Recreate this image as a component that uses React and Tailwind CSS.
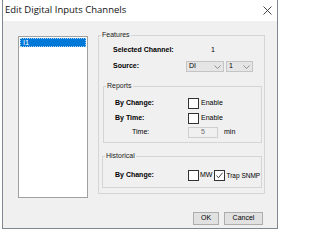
import React from "react";

const font = { fontFamily: '"Liberation Sans", Arial, sans-serif' };

function Chevron() {
  return (
    <svg width="7" height="4" viewBox="0 0 7 4" className="shrink-0">
      <polyline points="0.5,0.5 3.5,3.5 6.5,0.5" fill="none" stroke="#7a7a7a" strokeWidth="0.8" />
    </svg>
  );
}

function Check({ checked }) {
  return (
    <div className="w-[11px] h-[11px] border border-[#333] bg-white flex items-center justify-center shrink-0">
      {checked && (
        <svg width="9" height="9" viewBox="0 0 9 9">
          <polyline points="1.5,4.5 3.5,6.8 7.5,1.8" fill="none" stroke="#333" strokeWidth="0.9" />
        </svg>
      )}
    </div>
  );
}

export default function App() {
  return (
    <div className="w-[283px] h-[231px] bg-white overflow-hidden text-[#000] whitespace-nowrap" style={font}>
      <div className="ml-[2px] w-[276px] h-[229px] border border-t-0 border-[#7d8892] flex flex-col">
        {/* Title bar */}
        <div className="h-[21px] bg-white flex items-center justify-between pl-[2px] pr-[5px] shrink-0">
          <span className="text-[9.5px] text-[#111]" style={{ fontFamily: '"Open Sans", "Noto Sans", sans-serif' }}>
            Edit Digital Inputs Channels
          </span>
          <svg width="9" height="9" viewBox="0 0 9 9">
            <line x1="0.5" y1="0.5" x2="8.5" y2="8.5" stroke="#333" strokeWidth="0.9" />
            <line x1="8.5" y1="0.5" x2="0.5" y2="8.5" stroke="#333" strokeWidth="0.9" />
          </svg>
        </div>
        {/* Body */}
        <div className="flex-1 bg-[#f0f0f0] pt-[10px] pl-[15px] flex flex-col">
          <div className="flex">
            {/* list */}
            <div className="mt-[5px] w-[70px] h-[162px] bg-white border border-[#a0a0a0] p-[1px]">
              <div className="h-[9px] bg-[#0078d7] text-white text-[7.5px] leading-[7px] pl-[2px] border border-dotted border-[#9fcdf2]">
                I1
              </div>
            </div>
            {/* Features */}
            <fieldset className="ml-[10px] w-[166px] h-[163px] border border-[#d5d5d5] pl-[2px] pr-[2px] text-[7px]">
              <legend className="px-[1px] leading-[8px] text-[7px] text-[#222]">Features</legend>
              <div className="mt-[6px] h-[10px] flex items-center pl-[12px]">
                <span className="font-bold w-[98px]">Selected Channel:</span>
                <span>1</span>
              </div>
              <div className="mt-[6px] h-[11px] flex items-center pl-[12px]">
                <span className="font-bold w-[73px]">Source:</span>
                <div className="w-[38px] h-[11px] bg-[#e5e5e5] border border-[#c4c4c4] flex items-center justify-between pl-[2px] pr-[2px]">
                  <span>DI</span>
                  <Chevron />
                </div>
                <div className="ml-[2px] w-[27px] h-[11px] bg-[#e5e5e5] border border-[#c4c4c4] flex items-center justify-between pl-[2px] pr-[2px]">
                  <span>1</span>
                  <Chevron />
                </div>
              </div>
              {/* Reports */}
              <fieldset className="mt-[10px] ml-[2px] w-[159px] h-[61px] border border-[#d5d5d5] pl-[2px]">
                <legend className="px-[1px] leading-[8px] text-[7px] text-[#222]">Reports</legend>
                <div className="mt-[8px] h-[11px] flex items-center pl-[9px]">
                  <span className="font-bold w-[73px]">By Change:</span>
                  <Check />
                  <span className="ml-[2px]">Enable</span>
                </div>
                <div className="mt-[4px] h-[11px] flex items-center pl-[9px]">
                  <span className="font-bold w-[73px]">By Time:</span>
                  <Check />
                  <span className="ml-[2px]">Enable</span>
                </div>
                <div className="mt-[3px] h-[11px] flex items-center pl-[26px]">
                  <span className="w-[56px]">Time:</span>
                  <div className="w-[30px] h-[11px] border border-[#cfcfcf] bg-[#f0f0f0] flex items-center justify-center text-[#6d6d6d]">5</div>
                  <span className="ml-[6px]">min</span>
                </div>
              </fieldset>
              {/* Historical */}
              <fieldset className="mt-[9px] ml-[1px] w-[160px] h-[36px] border border-[#d5d5d5] pl-[2px]">
                <legend className="px-[1px] leading-[8px] text-[7px] text-[#222]">Historical</legend>
                <div className="mt-[10px] h-[11px] flex items-center pl-[10px]">
                  <span className="font-bold w-[73px]">By Change:</span>
                  <Check />
                  <span className="ml-[1px]">MW</span>
                  <div className="ml-[2px]"><Check checked /></div>
                  <span className="ml-[1px] text-[6.5px]">Trap SNMP</span>
                </div>
              </fieldset>
            </fieldset>
          </div>
          {/* Buttons */}
          <div className="mt-[14px] flex pl-[175px] gap-[5px] text-[7px]">
            <div className="w-[26px] h-[13px] bg-[#e1e1e1] border border-[#adadad] flex items-center justify-center">OK</div>
            <div className="w-[39px] h-[13px] bg-[#e1e1e1] border border-[#adadad] flex items-center justify-center">Cancel</div>
          </div>
        </div>
      </div>
    </div>
  );
}
